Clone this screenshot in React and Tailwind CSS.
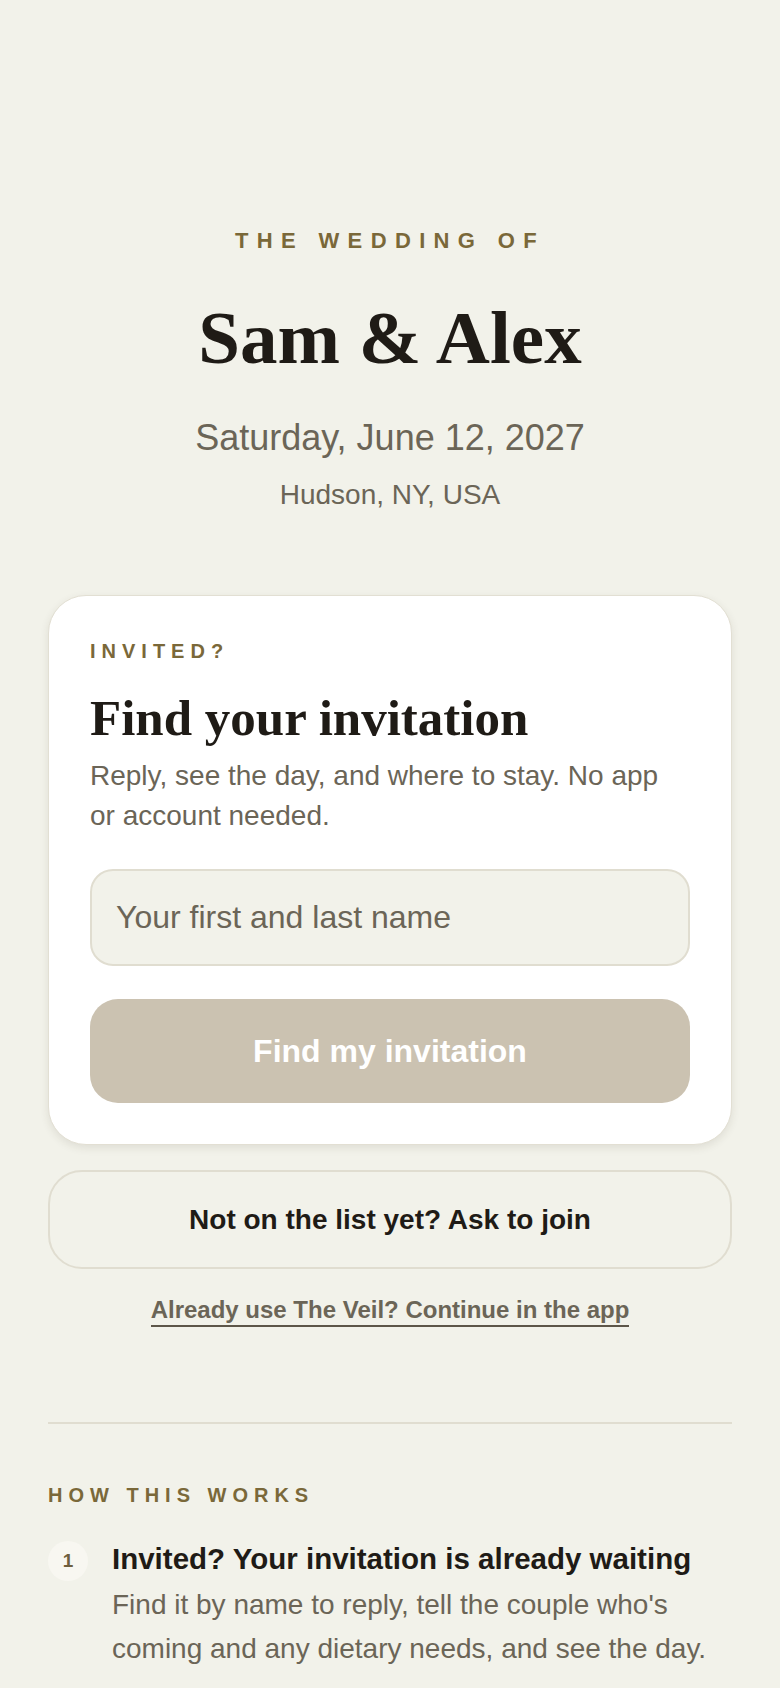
const sans = { fontFamily: '"Liberation Sans", Arial, sans-serif' };

export default function App() {
  return (
    <div
      className="min-h-[1688px] bg-[#f2f2ea] text-[#1f1b16] font-['Liberation_Sans',Arial,sans-serif]"
    >
      <div className="mx-auto w-[684px] pt-[227px] pb-10">
        <header className="flex flex-col items-center text-center">
          <p className="text-[22px] leading-[28px] font-bold tracking-[0.38em] text-[#7a6839]">
            THE WEDDING OF
          </p>
          <h1 className="mt-[43px] font-['Liberation_Serif',serif] text-[75px] leading-[80px] font-bold text-[#1f1b16]">
            Sam &amp; Alex
          </h1>
          <p className="mt-[38px] text-[36px] leading-[44px] text-[#6b6557]">Saturday, June 12, 2027</p>
          <p className="mt-[17px] text-[28px] leading-[36px] text-[#6b6557]">Hudson, NY, USA</p>
        </header>

        <section className="mt-[82px] rounded-[38px] border border-[#e2dfd3] bg-white px-[41px] pt-[43px] pb-[41px] shadow-[0_3px_8px_rgba(60,50,30,0.10)]">
          <p className="text-[20px] leading-[24px] font-bold tracking-[0.3em] text-[#7a6839]">INVITED?</p>
          <h2 className="mt-[27px] font-['Liberation_Serif',serif] text-[51px] leading-[56px] font-bold text-[#1f1b16]">
            Find your invitation
          </h2>
          <p className="mt-[10px] text-[28px] leading-[40px] text-[#6b6557]">
            Reply, see the day, and where to stay. No app or account needed.
          </p>
          <input
            type="text"
            placeholder="Your first and last name"
            style={sans}
            className="mt-[33px] block h-[97px] w-full rounded-[23px] border-2 border-[#e0ddd0] bg-[#f2f2ea] px-[24px] text-[32px] text-[#1f1b16] placeholder:text-[#6b6557] outline-none"
          />
          <button
            type="button"
            style={sans}
            className="mt-[33px] flex h-[104px] w-full items-center justify-center rounded-[28px] bg-[#cbc2b1] text-[32px] font-bold text-white"
          >
            Find my invitation
          </button>
        </section>

        <button
          type="button"
          style={sans}
          className="mt-[25px] flex h-[99px] w-full items-center justify-center rounded-[34px] border-2 border-[#e0ddd0] text-[28px] font-bold text-[#1f1b16]"
        >
          Not on the list yet? Ask to join
        </button>

        <div className="mt-[26px] text-center">
          <a
            href="#"
            className="inline-block border-b-2 border-[#5d5649] text-[24px] leading-[30px] font-bold text-[#6b6557]"
          >
            Already use The Veil? Continue in the app
          </a>
        </div>

        <div className="mt-[95px] border-t-2 border-[#e0ddd0]" />

        <section className="mt-[59px]">
          <p className="text-[20px] leading-[24px] font-bold tracking-[0.3em] text-[#7a6839]">HOW THIS WORKS</p>
          <div className="mt-[34px] flex items-start gap-[24px]">
            <div className="flex h-[40px] w-[40px] shrink-0 items-center justify-center rounded-full bg-[#f8f7f1] text-[19px] font-bold text-[#6e5f3e]">
              1
            </div>
            <div>
              <h3 className="text-[29.5px] leading-[36px] font-bold text-[#1f1b16]">
                Invited? Your invitation is already waiting
              </h3>
              <p className="mt-[6px] text-[28px] leading-[44px] text-[#6b6557]">
                Find it by name to reply, tell the couple who's coming and any dietary needs, and see the day.
              </p>
            </div>
          </div>
        </section>
      </div>
    </div>
  );
}
